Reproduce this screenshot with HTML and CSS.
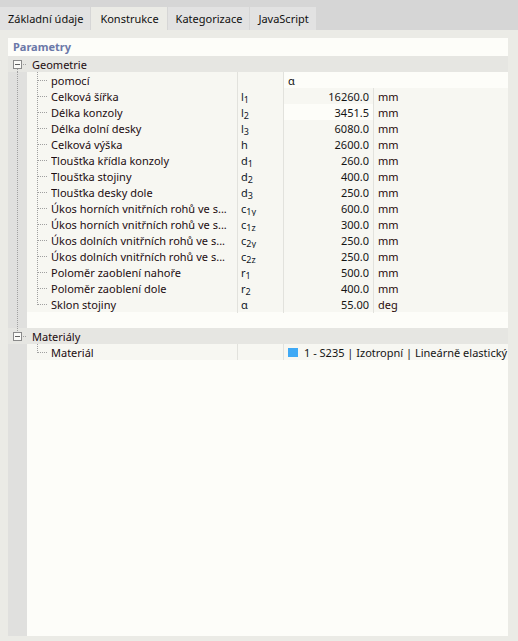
FILE: index.html
```html
<!DOCTYPE html>
<html lang="cs">
<head>
<meta charset="utf-8">
<title>Konstrukce</title>
<link rel="stylesheet" href="styles.css">
</head>
<body>
<div class="tabs">
  <div class="tab">Základní údaje</div>
  <div class="tab active">Konstrukce</div>
  <div class="tab">Kategorizace</div>
  <div class="tab">JavaScript</div>
</div>
<div class="panel">
  <div class="title">Parametry</div>
  <div class="tree">
    <div class="group first"><span class="gut"><span class="box"></span></span><span class="glabel">Geometrie</span></div>

    <div class="row"><span class="gut line"></span><span class="ind"></span><span class="name">pomocí</span><span class="sym"></span><span class="val wide white">α</span></div>
    <div class="row"><span class="gut line"></span><span class="ind"></span><span class="name">Celková šířka</span><span class="sym">l<sub>1</sub></span><span class="val num">16260.0</span><span class="unit">mm</span></div>
    <div class="row"><span class="gut line"></span><span class="ind"></span><span class="name">Délka konzoly</span><span class="sym">l<sub>2</sub></span><span class="val num hi">3451.5</span><span class="unit">mm</span></div>
    <div class="row"><span class="gut line"></span><span class="ind"></span><span class="name">Délka dolní desky</span><span class="sym">l<sub>3</sub></span><span class="val num">6080.0</span><span class="unit">mm</span></div>
    <div class="row"><span class="gut line"></span><span class="ind"></span><span class="name">Celková výška</span><span class="sym">h</span><span class="val num">2600.0</span><span class="unit">mm</span></div>
    <div class="row"><span class="gut line"></span><span class="ind"></span><span class="name">Tloušťka křídla konzoly</span><span class="sym">d<sub>1</sub></span><span class="val num">260.0</span><span class="unit">mm</span></div>
    <div class="row"><span class="gut line"></span><span class="ind"></span><span class="name">Tloušťka stojiny</span><span class="sym">d<sub>2</sub></span><span class="val num">400.0</span><span class="unit">mm</span></div>
    <div class="row"><span class="gut line"></span><span class="ind"></span><span class="name">Tloušťka desky dole</span><span class="sym">d<sub>3</sub></span><span class="val num">250.0</span><span class="unit">mm</span></div>
    <div class="row"><span class="gut line"></span><span class="ind"></span><span class="name">Úkos horních vnitřních rohů ve s...</span><span class="sym">c<sub>1y</sub></span><span class="val num">600.0</span><span class="unit">mm</span></div>
    <div class="row"><span class="gut line"></span><span class="ind"></span><span class="name">Úkos horních vnitřních rohů ve s...</span><span class="sym">c<sub>1z</sub></span><span class="val num">300.0</span><span class="unit">mm</span></div>
    <div class="row"><span class="gut line"></span><span class="ind"></span><span class="name">Úkos dolních vnitřních rohů ve s...</span><span class="sym">c<sub>2y</sub></span><span class="val num">250.0</span><span class="unit">mm</span></div>
    <div class="row"><span class="gut line"></span><span class="ind"></span><span class="name">Úkos dolních vnitřních rohů ve s...</span><span class="sym">c<sub>2z</sub></span><span class="val num">250.0</span><span class="unit">mm</span></div>
    <div class="row"><span class="gut line"></span><span class="ind"></span><span class="name">Poloměr zaoblení nahoře</span><span class="sym">r<sub>1</sub></span><span class="val num">500.0</span><span class="unit">mm</span></div>
    <div class="row"><span class="gut line"></span><span class="ind"></span><span class="name">Poloměr zaoblení dole</span><span class="sym">r<sub>2</sub></span><span class="val num">400.0</span><span class="unit">mm</span></div>
    <div class="row"><span class="gut line"></span><span class="ind last"></span><span class="name">Sklon stojiny</span><span class="sym">α</span><span class="val num">55.00</span><span class="unit">deg</span></div>

    <div class="gap"><span class="gut line"></span></div>

    <div class="group second"><span class="gut"><span class="box"></span></span><span class="glabel">Materiály</span></div>
    <div class="row"><span class="gut"></span><span class="ind last"></span><span class="name">Materiál</span><span class="sym"></span><span class="val wide"><span class="swatch"></span>1 - S235 | Izotropní | Lineárně elastický</span></div>

    <div class="fill"></div>
  </div>
</div>
</body>
</html>
```

FILE: styles.css
```css
* { box-sizing: border-box; }

html, body {
  margin: 0;
  height: 100%;
}

body {
  background: #ebebe6;
  font-family: "Noto Sans", "Open Sans", sans-serif;
  font-size: 11px;
  color: #1c1010;
  display: flex;
  flex-direction: column;
  overflow: hidden;
}

.tabs {
  display: flex;
  gap: 1px;
  height: 30px;
  padding-top: 7px;
  background: #d6d6d6;
}

.tab {
  height: 23px;
  line-height: 23px;
  padding: 0 7px 0 8px;
  background: #e2e2e2;
  color: #101010;
}

.tab.active {
  background: #ebebe6;
  padding: 0 8px 0 9px;
}

.panel {
  margin: 8px 10px 5px 8px;
  flex: 1;
  display: flex;
  flex-direction: column;
  background: #fdfdf9;
}

.title {
  height: 18px;
  line-height: 18px;
  padding-left: 5px;
  font-weight: bold;
  color: #6b78a8;
}

.tree {
  flex: 1;
  display: flex;
  flex-direction: column;
  background: linear-gradient(to right, #e0e0de 19px, #fdfdf9 19px);
}

.group {
  height: 16px;
  display: flex;
  align-items: center;
  background: #e6e6e2;
}

.group .gut {
  width: 19px;
  height: 16px;
  flex: none;
  display: flex;
  align-items: center;
  padding-left: 5px;
  background-repeat: no-repeat;
}

.group.first .gut {
  background-image:
    repeating-linear-gradient(to bottom, #a0a0a0 0 1px, transparent 1px 2px),
    repeating-linear-gradient(to right, #a0a0a0 0 1px, transparent 1px 2px);
  background-size: 1px 4px, 8px 1px;
  background-position: 9px 13px, 15px 8px;
}

.group.second .gut {
  background-image:
    repeating-linear-gradient(to bottom, #a0a0a0 0 1px, transparent 1px 2px),
    repeating-linear-gradient(to right, #a0a0a0 0 1px, transparent 1px 2px);
  background-size: 1px 4px, 8px 1px;
  background-position: 9px 0, 15px 8px;
}

.box {
  width: 9px;
  height: 9px;
  border: 1px solid #8a8a8a;
  background: linear-gradient(#606060, #606060) center / 5px 1px no-repeat, #fbfbf8;
}

.glabel {
  padding-left: 5px;
  line-height: 17px;
  color: #1c0c10;
}

.row {
  height: 16px;
  display: grid;
  grid-template-columns: 19px 24px 186px 46px 90px 1fr;
  line-height: 17px;
  background: #f7f7f2;
}

.row .gut {
  background-color: #e0e0de;
}

.gut.line,
.gap .gut.line {
  background-image: repeating-linear-gradient(to bottom, #a0a0a0 0 1px, transparent 1px 2px);
  background-size: 1px 100%;
  background-position: 9px 0;
  background-repeat: no-repeat;
}

.ind {
  background-image:
    repeating-linear-gradient(to bottom, #a0a0a0 0 1px, transparent 1px 2px),
    repeating-linear-gradient(to right, #a0a0a0 0 1px, transparent 1px 2px);
  background-size: 1px 100%, 10px 1px;
  background-position: 10px 0, 11px 8px;
  background-repeat: no-repeat;
}

.ind.last {
  background-size: 1px 9px, 10px 1px;
}

.name {
  overflow: hidden;
  white-space: nowrap;
  color: #1c0c10;
}

.sym {
  border-left: 1px solid #e2e2dd;
  padding-left: 3px;
  color: #101828;
  white-space: nowrap;
}

sub {
  font-size: 9px;
  vertical-align: -2px;
  line-height: 0;
}

.val {
  border-left: 1px solid #e2e2dd;
  white-space: nowrap;
  overflow: hidden;
}

.val.num {
  text-align: right;
  padding-right: 4px;
  color: #141414;
}

.val.hi {
  background: #fdfdf9;
}

.val.wide {
  grid-column: 5 / 7;
  padding-left: 4px;
  display: flex;
  align-items: center;
  color: #141414;
}

.val.white {
  background: #fdfdf9;
}

.swatch {
  width: 10px;
  height: 9px;
  background: #3fa9f5;
  margin-right: 6px;
  flex: none;
}

.unit {
  border-left: 1px solid #e2e2dd;
  padding-left: 4px;
  color: #2a0c0c;
}

.gap {
  height: 16px;
  display: flex;
}

.gap .gut {
  width: 19px;
  height: 16px;
}

.fill {
  flex: 1;
}
```
